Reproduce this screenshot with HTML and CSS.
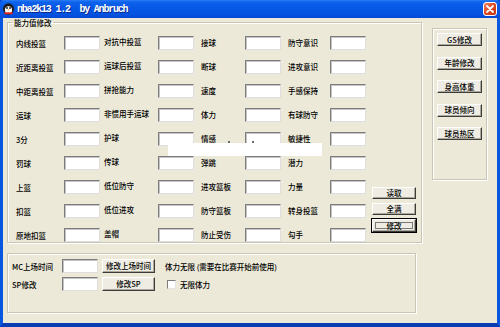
FILE: index.html
```html
<!DOCTYPE html>
<html lang="zh-CN">

<head>
  <meta charset="UTF-8">
  <meta name="viewport" content="width=device-width, initial-scale=1.0">
  <title>nba2k13 1.2 by Anbruch</title>
  <link rel="stylesheet" href="styles.css">
</head>

<body>
  <div class="window">
    <div class="titlebar">
      <svg class="app-icon" viewBox="0 0 13 13" width="13" height="13">
        <ellipse cx="6.5" cy="6" rx="5.5" ry="5.8" fill="#1a1a1a" />
        <ellipse cx="6.5" cy="7" rx="3.6" ry="3.8" fill="#fff" />
        <circle cx="5" cy="5" r="0.9" fill="#111" />
        <circle cx="8" cy="5" r="0.9" fill="#111" />
        <path d="M5.3 6.6 L7.7 6.6 L6.5 7.8 Z" fill="#f0a020" />
        <rect x="2.2" y="9.2" width="8.6" height="2" rx="1" fill="#e02a1a" />
      </svg>
      <span class="title">nba2k13 1.2&nbsp;&nbsp;by Anbruch</span>
      <span class="close-btn">
        <svg viewBox="0 0 14 14" width="14" height="14">
          <path d="M4 4 L10 10 M10 4 L4 10" stroke="#fff" stroke-width="1.8" stroke-linecap="round" />
        </svg>
      </span>
    </div>

    <div class="frame">
      <div class="top-row">
        <fieldset class="group attr-group">
          <legend>能力值修改</legend>
          <div class="attr-body">
            <div class="attr-grid">
              <label class="lbl c1">内线投篮</label><input class="field" type="text">
              <label class="lbl c2">对抗中投篮</label><input class="field" type="text">
              <label class="lbl c3">接球</label><input class="field" type="text">
              <label class="lbl c4">防守意识</label><input class="field" type="text">

              <label class="lbl c1">近距离投篮</label><input class="field" type="text">
              <label class="lbl c2">运球后投篮</label><input class="field" type="text">
              <label class="lbl c3">断球</label><input class="field" type="text">
              <label class="lbl c4">进攻意识</label><input class="field" type="text">

              <label class="lbl c1">中距离投篮</label><input class="field" type="text">
              <label class="lbl c2">拼抢能力</label><input class="field" type="text">
              <label class="lbl c3">速度</label><input class="field" type="text">
              <label class="lbl c4">手感保持</label><input class="field" type="text">

              <label class="lbl c1">运球</label><input class="field" type="text">
              <label class="lbl c2">非惯用手运球</label><input class="field" type="text">
              <label class="lbl c3">体力</label><input class="field" type="text">
              <label class="lbl c4">有球防守</label><input class="field" type="text">

              <label class="lbl c1">3分</label><input class="field" type="text">
              <label class="lbl c2">护球</label><input class="field" type="text">
              <label class="lbl c3">情感</label><input class="field" type="text">
              <label class="lbl c4">敏捷性</label><input class="field" type="text">

              <label class="lbl c1">罚球</label><input class="field" type="text">
              <label class="lbl c2">传球</label><input class="field" type="text">
              <label class="lbl c3">弹跳</label><input class="field" type="text">
              <label class="lbl c4">潜力</label><input class="field" type="text">

              <label class="lbl c1">上篮</label><input class="field" type="text">
              <label class="lbl c2">低位防守</label><input class="field" type="text">
              <label class="lbl c3">进攻篮板</label><input class="field" type="text">
              <label class="lbl c4">力量</label><input class="field" type="text">

              <label class="lbl c1">扣篮</label><input class="field" type="text">
              <label class="lbl c2">低位进攻</label><input class="field" type="text">
              <label class="lbl c3">防守篮板</label><input class="field" type="text">
              <label class="lbl c4">转身投篮</label><input class="field" type="text">

              <label class="lbl c1">原地扣篮</label><input class="field" type="text">
              <label class="lbl c2">盖帽</label><input class="field" type="text">
              <label class="lbl c3">防止受伤</label><input class="field" type="text">
              <label class="lbl c4">勾手</label><input class="field" type="text">
            </div>
            <div class="action-col">
              <button class="btn">读取</button>
              <button class="btn">全满</button>
              <button class="btn btn-default">修改</button>
            </div>
          </div>
        </fieldset>

        <div class="group side-group">
          <button class="btn">GS修改</button>
          <button class="btn">年龄修改</button>
          <button class="btn">身高体重</button>
          <button class="btn">球员倾向</button>
          <button class="btn">球员热区</button>
        </div>
      </div>

      <div class="group bottom-group">
        <div class="bottom-row">
          <label class="bottom-lbl">MC上场时间</label>
          <input class="field" type="text">
          <button class="btn btn-wide">修改上场时间</button>
          <span class="note">体力无限 (需要在比赛开始前使用)</span>
        </div>
        <div class="bottom-row">
          <label class="bottom-lbl">SP修改</label>
          <input class="field" type="text">
          <button class="btn btn-wide">修改SP</button>
          <input class="check" type="checkbox" id="infinite-stamina">
          <label class="check-lbl" for="infinite-stamina">无限体力</label>
        </div>
      </div>

      <!-- blank strip left over the form in the capture -->
      <div class="blank-strip"></div>
      <span class="speck speck-a"></span>
      <span class="speck speck-b"></span>
    </div>
  </div>
</body>

</html>
```

FILE: styles.css
```css
* {
  box-sizing: border-box;
  padding: 0;
  margin: 0;
}

html {
  font-family: "Noto Sans CJK SC", "Liberation Sans", sans-serif;
  font-size: 7.5px;
  font-weight: 500;
  color: #000;
}

body {
  width: 500px;
  height: 327px;
  overflow: hidden;
  background-color: #0a3ec8;
}

.window {
  display: flex;
  flex-direction: column;
  width: 500px;
  height: 327px;
}

/* title bar */
.titlebar {
  display: flex;
  align-items: center;
  flex: none;
  height: 18px;
  padding: 0 3px 0 2px;
  border-radius: 4px 4px 0 0;
  background: linear-gradient(to bottom, #2a7cf6 0, #0d63ec 2px, #0858e6 40%, #0454e2 75%, #0349d4 100%);
}

.app-icon {
  flex: none;
}

.title {
  flex: 1;
  margin-left: 2px;
  font-family: "Liberation Mono", monospace;
  font-weight: bold;
  font-size: 10px;
  letter-spacing: -1.2px;
  color: #fff;
  text-shadow: 1px 1px 0 #0a2a90;
  white-space: nowrap;
}

.close-btn {
  display: flex;
  width: 14px;
  height: 14px;
  border: 1px solid #fff;
  border-radius: 3px;
  background: linear-gradient(to bottom right, #f08a6a, #de4a24 45%, #c4360e);
}

.close-btn svg {
  margin: -1px;
}

/* client area */
.frame {
  position: relative;
  flex: 1;
  border: 3px solid #0757e0;
  border-top: none;
  border-bottom: 4px solid #0a3cb4;
  background-color: #ECE9D8;
}

.group {
  border: 1px solid #c9c6b6;
  box-shadow: 1px 1px 0 #fff, inset 1px 1px 0 #fff;
}

.top-row {
  display: flex;
  align-items: flex-start;
  padding-left: 4px;
}

.attr-group {
  width: 415px;
  padding: 9px 5px 0 8px;
}

.attr-group legend {
  margin-left: -3px;
  padding: 0 1px;
  line-height: 9px;
}

.attr-body {
  display: flex;
}

.attr-grid {
  display: grid;
  grid-template-columns: 48px 36px 58px 36px 51px 36px 49px 36px;
  grid-auto-rows: 14px;
  row-gap: 10px;
}

.lbl {
  line-height: 14px;
  white-space: nowrap;
}

.lbl.c1 {
  line-height: 16px;
}

.lbl.c2 {
  padding-left: 4px;
  line-height: 12px;
}

.lbl.c3,
.lbl.c4 {
  padding-left: 7px;
}

.field {
  width: 36px;
  height: 14px;
  border: 1px solid;
  border-color: #7c7c7c #dedede #dedede #7c7c7c;
  box-shadow: inset 1px 1px 0 #c4c4c4;
  background-color: #fff;
  font: inherit;
}

.field:focus {
  outline: none;
}

.btn {
  height: 12px;
  border: 1px solid;
  border-color: #fff #3c3c3c #3c3c3c #fff;
  box-shadow: inset -1px -1px 0 #aca899;
  background-color: #efede3;
  font: inherit;
  line-height: 10px;
  color: #000;
  white-space: nowrap;
}

.btn-default {
  height: 13px;
  outline: 1px solid #000;
  outline-offset: 0;
  box-shadow: inset -1px -1px 0 #aca899, inset 0 0 0 2px #efede3, inset 0 0 0 3px #7a7a7a;
}

.action-col {
  display: flex;
  flex-direction: column;
  align-self: flex-end;
  gap: 4px;
  width: 44px;
  margin: 0 0 10px 6px;
}

.side-group {
  display: flex;
  flex-direction: column;
  gap: 10.5px;
  width: 55px;
  height: 152px;
  margin: 10px 0 0 10px;
  padding: 4px 4px 0 4px;
}

.side-group .btn {
  height: 13px;
}

/* bottom panel */
.bottom-group {
  display: flex;
  flex-direction: column;
  gap: 4px;
  width: 409px;
  height: 60px;
  margin: 10px 0 0 4px;
  padding: 5px 4px 0 4px;
}

.bottom-row {
  display: flex;
  align-items: center;
  height: 14px;
}

.bottom-lbl {
  width: 50px;
  white-space: nowrap;
}

.btn-wide {
  width: 53px;
  height: 14px;
  margin-left: 4px;
}

.note {
  margin-left: 10px;
  white-space: nowrap;
}

.check {
  appearance: none;
  width: 9px;
  height: 9px;
  margin-left: 12px;
  border: 1px solid;
  border-color: #7c7c7c #e4e4e4 #e4e4e4 #7c7c7c;
  background-color: #fff;
}

.check-lbl {
  margin-left: 4px;
}

/* leftover blank strip over the middle of the form */
.blank-strip {
  position: absolute;
  left: 165px;
  top: 125px;
  width: 154px;
  height: 13px;
  background-color: #fff;
}

.speck {
  position: absolute;
  width: 2px;
  height: 2px;
  background-color: #6a6a6a;
}

.speck-a {
  left: 225px;
  top: 123px;
}

.speck-b {
  left: 249px;
  top: 123px;
}
```
